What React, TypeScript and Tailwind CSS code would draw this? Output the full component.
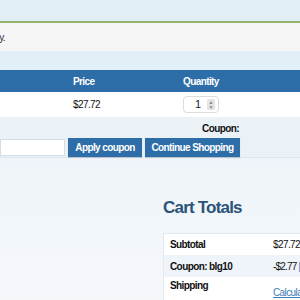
export default function App() {
  return (
    <div
      className="w-[300px] h-[300px] overflow-hidden bg-gradient-to-b from-[#e3eff7] via-[#eef4f9] to-[#f5f8fb] text-[10px] tracking-[-0.6px] text-[#111]"
      style={{ fontFamily: '"Liberation Sans", Arial, sans-serif' }}
    >
      {/* Top strip */}
      <div className="h-[21px] bg-[#e1eef6]" />

      {/* Notice */}
      <div className="h-[30px] border-t-2 border-[#95b46f] bg-[#f6f6f6] flex items-center">
        <p className="-ml-[300px] w-[305px] shrink-0 text-right text-[10px] text-[#333] whitespace-nowrap">
          Coupon code applied successfully.
        </p>
      </div>

      <div className="h-[19px] bg-[#e3eff7]" />

      {/* Cart table */}
      <div className="flex h-[22px] items-center bg-[#2d6ea8] font-bold text-white">
        <div className="w-[73px] shrink-0" />
        <div className="w-[110px] shrink-0">Price</div>
        <div>Quantity</div>
      </div>
      <div className="flex h-[25px] items-center bg-white">
        <div className="w-[73px] shrink-0" />
        <div className="w-[110px] shrink-0">$27.72</div>
        <div className="flex h-[17px] w-[36px] items-center justify-end gap-[6px] rounded-sm border border-[#dcdcdc] bg-white pr-[3px]">
          <span className="text-[11px] tracking-normal text-[#222]">1</span>
          <span className="flex h-[11px] w-[8px] flex-col items-center justify-center rounded-[1px] bg-[#e4e4e4] text-[5px] leading-[5px] tracking-normal text-[#888]">
            <span>▲</span>
            <span>▼</span>
          </span>
        </div>
      </div>

      {/* Actions */}
      <div className="h-[41px] border-b border-[#dde6ee] bg-[#eaf2f8]">
        <div className="flex justify-end pr-[61px] pt-[5px] font-bold leading-[13px]">
          Coupon:
        </div>
        <div className="flex items-center gap-[3px] pt-[3px]">
          <div className="h-[17px] w-[65px] shrink-0 border border-[#d5dde4] bg-white" />
          <button className="h-[19px] w-[74px] shrink-0 whitespace-nowrap bg-[#2d6ea8] text-[10px] font-bold text-white shadow-[0_1px_1px_rgba(0,0,0,0.15)]">
            Apply coupon
          </button>
          <button className="h-[19px] w-[95px] shrink-0 whitespace-nowrap bg-[#2d6ea8] text-[10px] font-bold text-white shadow-[0_1px_1px_rgba(0,0,0,0.15)]">
            Continue Shopping
          </button>
        </div>
      </div>

      {/* Cart totals */}
      <div className="pl-[163px] pt-[40px]">
        <h2 className="whitespace-nowrap text-[17px] font-bold leading-[20px] tracking-[-0.8px] text-[#2b5378]">
          Cart Totals
        </h2>
        <div className="mt-[15px] w-[200px] border-l border-t border-[#e2e9ef] font-bold">
          <div className="flex h-[21px] items-center bg-white">
            <div className="w-[109px] shrink-0 pl-[6px]">Subtotal</div>
            <div className="whitespace-nowrap font-normal">$27.72</div>
          </div>
          <div className="flex h-[22px] items-center bg-[#eef4f9]">
            <div className="w-[109px] shrink-0 whitespace-nowrap pl-[6px]">Coupon: blg10</div>
            <div className="whitespace-nowrap font-normal tracking-[-0.8px]">
              -$2.77 <span className="text-[#3b7bb5] underline">[Remove]</span>
            </div>
          </div>
          <div className="flex h-[30px] bg-white">
            <div className="w-[109px] shrink-0 pl-[6px] pt-[1px]">Shipping</div>
            <div className="whitespace-nowrap pt-[8px] font-normal text-[#3b7bb5] underline">
              Calculate Shipping
            </div>
          </div>
        </div>
      </div>
    </div>
  );
}
